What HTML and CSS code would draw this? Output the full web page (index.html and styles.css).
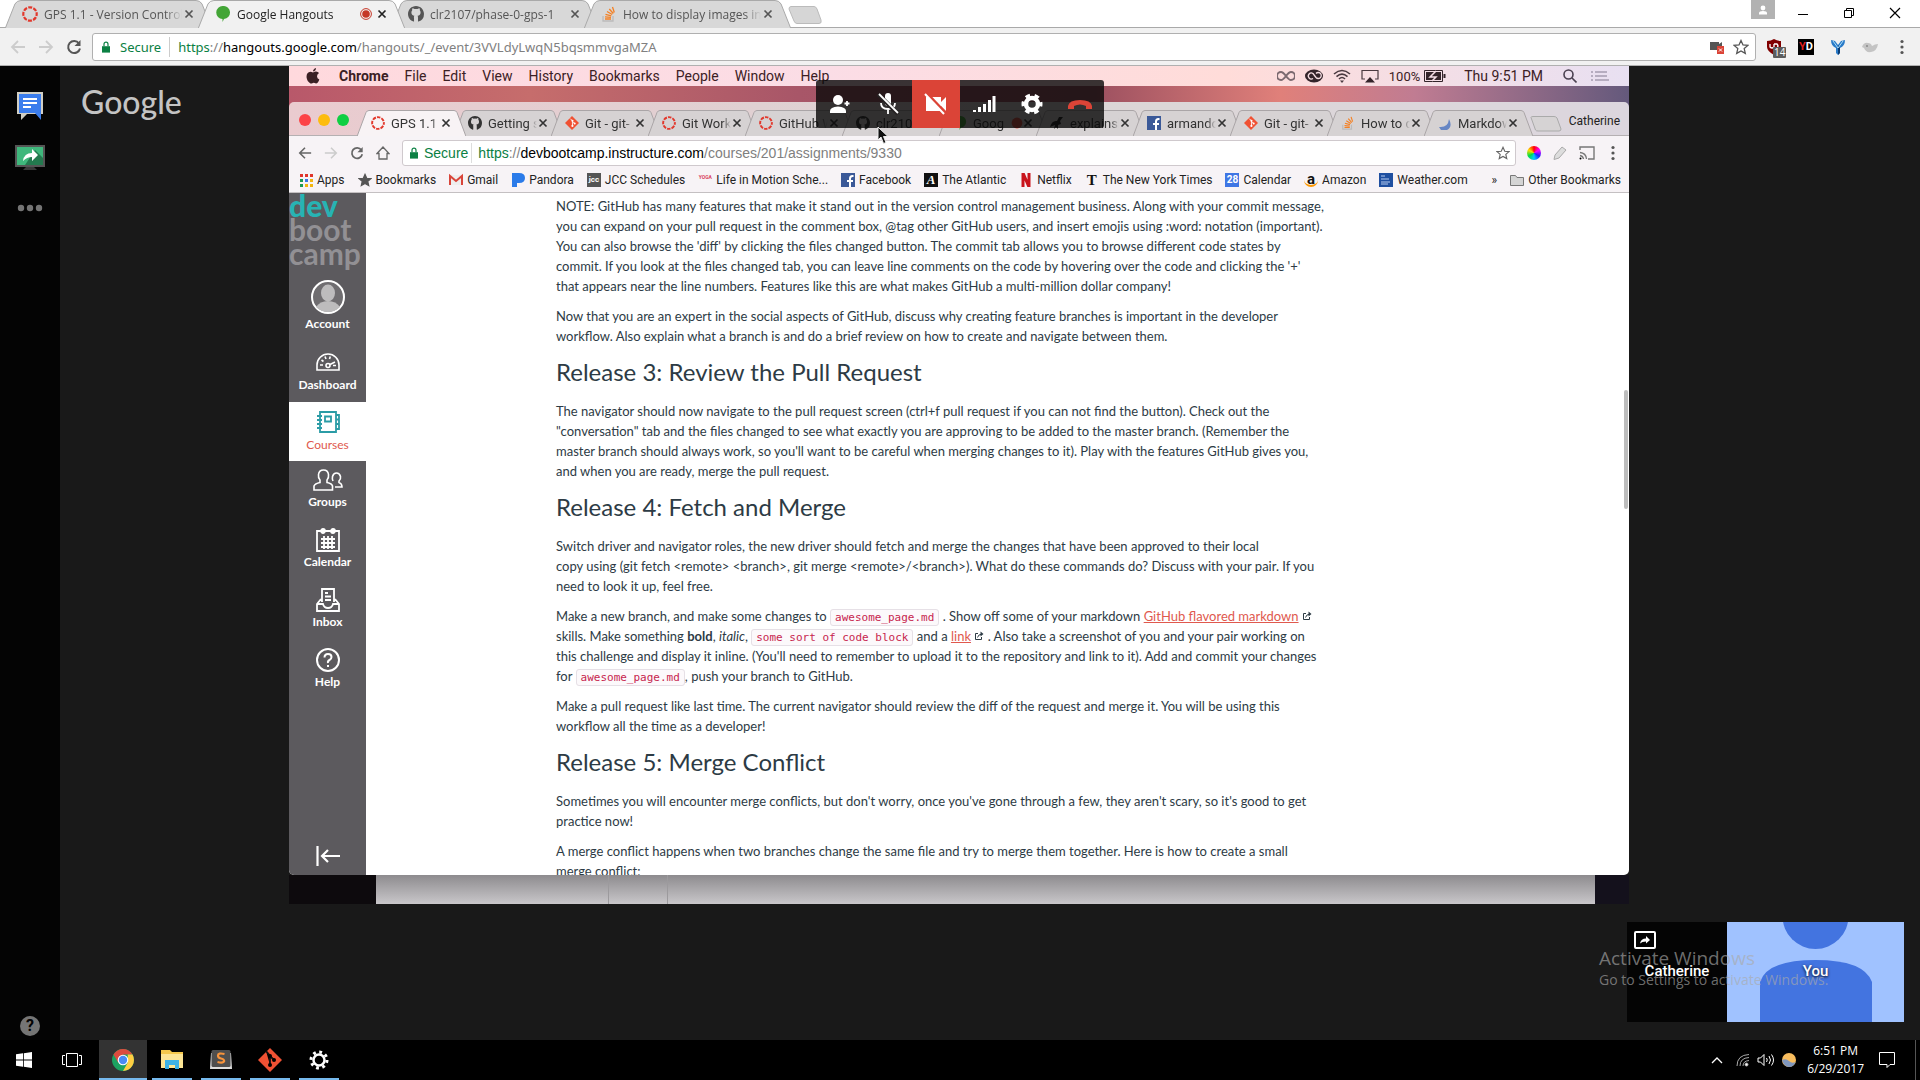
FILE: index.html
```html
<!DOCTYPE html>
<html lang="en">
<head>
<meta charset="utf-8">
<title>Google Hangouts</title>
<link rel="stylesheet" href="styles.css">
</head>
<body>
<svg class="defs" aria-hidden="true">
  <symbol id="tab" viewBox="0 0 208 28" preserveAspectRatio="none"><path d="M0 29L10 4Q12 .5 16 .5H192Q196 .5 198 4L208 29" vector-effect="non-scaling-stroke"/></symbol>
  <symbol id="mtab" viewBox="0 0 109 26" preserveAspectRatio="none"><path d="M0 26.500L9 2.500Q10 .5 12 .5H97Q99 .5 100 2.500L109 26.500" vector-effect="non-scaling-stroke"/></symbol>
  <symbol id="canvas" viewBox="0 0 16 16"><circle cx="8" cy="8" r="6.700" fill="none" stroke="#e2382c" stroke-width="2.200" stroke-dasharray="4 1.260" stroke-dashoffset="2"/></symbol>
  <symbol id="github" viewBox="0 0 16 16"><path fill="currentColor" d="M8 0C3.580 0 0 3.580 0 8c0 3.540 2.290 6.530 5.470 7.590.4.070.55-.17.55-.38v-3.300c-.3-1-.1-1.700.4-2.200C4.500 9.500 3.400 8.600 3.400 6.500c0-.9.300-1.600.8-2.200-.1-.6-.1-1.300.2-2 .8 0 1.500.4 2.100.8a7 7 0 0 1 3 0c.6-.4 1.300-.8 2.100-.8.300.7.300 1.400.2 2 .5.600.8 1.300.8 2.200 0 2.100-1.100 3-3 3.200.4.500.4 1.200.4 2v3.500c0 .2.150.46.55.38A8 8 0 0 0 16 8c0-4.420-3.580-8-8-8z"/></symbol>
  <symbol id="git" viewBox="0 0 16 16"><path fill="#f05133" d="M8 0L16 8L8 16L0 8z"/><path d="M6 3L8.500 5.500V11.500M8.500 6L11 8.500" stroke="#fff" fill="none"/><circle cx="8.500" cy="5.500" r="1.200" fill="#fff"/><circle cx="8.500" cy="11.300" r="1.200" fill="#fff"/><circle cx="11" cy="8.500" r="1.200" fill="#fff"/></symbol>
  <symbol id="stack" viewBox="0 0 16 16"><path d="M2 10v5h10v-5" fill="none" stroke="#bcbbbb" stroke-width="1.300"/><path d="M4 13h6M4 10.800l6 .6M4.500 8.300l5.800 1.600M6 5.500l5.200 3M8.300 3l4 4.500M11.500 1l1.800 5.500" stroke="#f48024" stroke-width="1.300"/></symbol>
  <symbol id="fb" viewBox="0 0 14 14"><path fill="#3b5998" d="M0 0h14v14H0z"/><path d="M9 14V8.500M6 8h6M9 9V5.500Q9 3 11.500 3H12.500" stroke="#fff" stroke-width="2" fill="none"/></symbol>
  <symbol id="x" viewBox="0 0 10 10"><path d="M1.500 1.500l7 7M8.500 1.500l-7 7" stroke="currentColor" stroke-width="1.700"/></symbol>
  <symbol id="lock" viewBox="0 0 10 14"><path d="M2.500 6V3.500a2.500 2.500 0 0 1 5 0V6" fill="none" stroke="#0b8043" stroke-width="1.500"/><path d="M0 6h10v8H0z" fill="#0b8043"/></symbol>
  <symbol id="back" viewBox="0 0 16 16"><path d="M15 8H2M8 2L2 8l6 6" fill="none" stroke="currentColor" stroke-width="1.800"/></symbol>
  <symbol id="fwd" viewBox="0 0 16 16"><path d="M1 8h13M8 2l6 6-6 6" fill="none" stroke="currentColor" stroke-width="1.800"/></symbol>
  <symbol id="reload" viewBox="0 0 16 16"><path d="M13 4.500A6 6 0 1 0 14 9.500" fill="none" stroke="currentColor" stroke-width="2"/><path d="M14.500 1v6h-6z" fill="currentColor"/></symbol>
  <symbol id="star" viewBox="0 0 16 16"><path d="M8 1.500l2 4.500 4.900.4-3.700 3.200 1.100 4.800L8 11.900l-4.300 2.500 1.100-4.800L1.100 6.400 6 6z" stroke="currentColor" stroke-width="1.300"/></symbol>
  <symbol id="dots" viewBox="0 0 4 16"><circle cx="2" cy="2.500" r="1.600"/><circle cx="2" cy="8" r="1.600"/><circle cx="2" cy="13.500" r="1.600"/></symbol>
  <symbol id="ext" viewBox="0 0 10 10"><path d="M4 2.500H1.500v6h6V6M3.500 6.500Q4 3.500 8 3" fill="none" stroke="#2d3b45"/><path d="M6.500.5L9.500 3l-3 2.500z" fill="#2d3b45"/></symbol>
</svg>

<header class="browser">
  <div class="strip">
    <div class="tab"><svg class="shape"><use href="#tab"/></svg><svg class="i16"><use href="#canvas"/></svg><span class="label">GPS 1.1 - Version Control</span><svg class="i10"><use href="#x"/></svg></div>
    <div class="tab on"><svg class="shape"><use href="#tab"/></svg><svg class="i16" viewBox="0 0 16 16"><path d="M8 0a6.500 6.500 0 0 1 1 13L7.500 16V13A6.500 6.500 0 0 1 8 0z" fill="#43a536"/></svg><span class="label">Google Hangouts</span><svg class="i12" viewBox="0 0 12 12"><circle cx="6" cy="6" r="5.400" fill="none" stroke="#c53727"/><circle cx="6" cy="6" r="3.800" fill="#c53727"/></svg><svg class="i10"><use href="#x"/></svg></div>
    <div class="tab"><svg class="shape"><use href="#tab"/></svg><svg class="i16"><use href="#github"/></svg><span class="label">clr2107/phase-0-gps-1</span><svg class="i10"><use href="#x"/></svg></div>
    <div class="tab"><svg class="shape"><use href="#tab"/></svg><svg class="i16"><use href="#stack"/></svg><span class="label">How to display images in</span><svg class="i10"><use href="#x"/></svg></div>
    <button class="newtab" aria-label="New tab"><svg width="34" height="18" viewBox="0 0 34 18"><path d="M1 3Q1 .5 3 .5H26Q28 .5 29 3L33 14Q34 17.500 31 17.500H9Q7 17.500 6 15z" fill="#d6d6d6" stroke="#bbb"/></svg></button>
    <div class="winctl">
      <span class="person"><svg width="10" height="10" viewBox="0 0 10 10" fill="#fff"><circle cx="5" cy="3" r="2.400"/><path d="M1 9.500V8q0-2 4-2t4 2v1.500z"/></svg></span>
      <button aria-label="Minimize"><svg class="i12" viewBox="0 0 12 12"><path d="M1 7.500h10" stroke="#000"/></svg></button>
      <button aria-label="Restore"><svg class="i12" viewBox="0 0 12 12" fill="none" stroke="#000"><path d="M1.500 3.500h7v7h-7zM3.500 3.500v-2h7v7h-2"/></svg></button>
      <button aria-label="Close"><svg class="i12" viewBox="0 0 12 12"><path d="M1 1l10 10M11 1L1 11" stroke="#000" stroke-width="1.200"/></svg></button>
    </div>
  </div>
  <div class="bar">
    <nav class="navs"><button class="dim" aria-label="Back"><svg class="i16"><use href="#back"/></svg></button><button class="dim" aria-label="Forward"><svg class="i16"><use href="#fwd"/></svg></button><button aria-label="Reload"><svg class="i16"><use href="#reload"/></svg></button></nav>
    <div class="omni">
      <svg class="lock"><use href="#lock"/></svg><span class="secure">Secure</span>
      <span class="url"><b>https</b>://<i>hangouts.google.com</i>/hangouts/_/event/3VVLdyLwqN5bqsmmvgaMZA</span>
      <svg width="16" height="14" viewBox="0 0 16 14"><path d="M1 2h9v2l3-2v8H1z" fill="#555"/><path d="M8 6h7v8H8z" fill="#db4437"/><path d="M10 8.500l3 3M13 8.500l-3 3" stroke="#fff"/></svg>
      <svg class="i16" fill="none" color="#555"><use href="#star"/></svg>
    </div>
    <div class="exts">
      <button class="ub" aria-label="Ad blocker, 14 blocked"><svg class="i16" viewBox="0 0 16 16"><path d="M1 2Q5 2 8 0q3 2 7 2v6q0 4-7 8-7-4-7-8z" fill="#800000"/><path d="M4 5v3q2 2 4 0V5v4h3q2-2 0-4H8" fill="none" stroke="#fff" stroke-width="1.300"/></svg><em>14</em></button>
      <button class="yd" aria-label="YD"><span>Y</span>D</button>
      <button aria-label="Extension"><svg class="i16" viewBox="0 0 16 16"><path d="M1 1l4 1 3 4 3-4 4-1q0 6-5 8v5l-2 2-2-2V9Q1 7 1 1z" fill="#2a7bc8"/><path d="M8 6v10l2-2V9z" fill="#0b3d74"/><path d="M3 2l5 7 5-7" stroke="#a8dcf8" fill="none"/></svg></button>
      <button aria-label="Extension"><svg class="i16" viewBox="0 0 16 16"><path d="M0 8q2-5 6-4 3 0 4 3 3-2 6-2-1 7-7 8-5 1-7-4z" fill="#c4c4c4"/><circle cx="5" cy="7" r="1" fill="#888"/></svg></button>
      <button aria-label="Menu"><svg class="dots"><use href="#dots"/></svg></button>
    </div>
  </div>
</header>

<main class="app">
  <aside class="rail">
    <button aria-label="Chat"><svg width="28" height="30" viewBox="0 0 28 30"><path d="M1 1h26v22H11l-6 6v-6H1z" fill="#d2cfc4"/><path d="M3 3h22v26l-6-7H3z" fill="#3b7ded"/><path d="M7 8h14M7 12h14M7 16h8" stroke="#fff" stroke-width="2"/></svg></button>
    <button aria-label="Share screen"><svg width="30" height="26" viewBox="0 0 30 26"><path d="M0 0h30v22H0z" fill="#555"/><path d="M2 2h26v18H2z" fill="#3fb77c"/><path d="M20 5l8 8v7H10z" fill="#23794e"/><path d="M8 16q1-8 9-8V4l6 6-6 6v-4q-5 0-9 4z" fill="#fff"/><path d="M11 22h8l3 3H8z" fill="#3a3a3a"/></svg></button>
    <button aria-label="More"><svg width="26" height="8" viewBox="0 0 26 8" fill="#747474"><circle cx="4" cy="4" r="3.200"/><circle cx="13" cy="4" r="3.200"/><circle cx="22" cy="4" r="3.200"/></svg></button>
    <button class="help" aria-label="Help">?</button>
  </aside>
  <section class="stage">
    <div class="google">Google</div>
    <div class="share">
      <div class="menubar">
        <svg class="apple" width="14" height="16" viewBox="0 0 14 16"><path d="M10 0q0 3-3 3.500Q7 1 10 0zM7 4.500q1.500-1 3-1 2 0 3 1.500-2 1.200-2 3.200 0 2.300 2.300 3.300Q12 15.500 10 15.500q-1.500-.8-3-.6-1.500.6-2.500.6Q1 13.500.5 9 .5 4 4.500 3.700q1 0 2.500.8z" fill="#3b2024"/></svg>
        <strong>Chrome</strong><span>File</span><span>Edit</span><span>View</span><span>History</span><span>Bookmarks</span><span>People</span><span>Window</span><span>Help</span>
        <div class="status">
          <svg width="18" height="12" viewBox="0 0 18 12"><path d="M9 6Q6 2 4 2a4 4 0 0 0 0 8q2 0 5-4t5-4a4 4 0 0 1 0 8q-2 0-5-4z" fill="none" stroke="#7b6a70" stroke-width="2"/></svg>
          <svg width="18" height="14" viewBox="0 0 18 14"><ellipse cx="9" cy="7" rx="9" ry="6.500" fill="#33242a"/><path d="M8 9.500a3 3 0 1 1 0-5l3 4a3 3 0 1 0 0-4" fill="none" stroke="#f6dfe4" stroke-width="1.300"/></svg>
          <svg width="18" height="14" viewBox="0 0 18 14"><path d="M1 5q8-7 16 0M3.500 7.700q5.500-5 11 0M6 10q3-3 6 0" fill="none" stroke="#4a3a40" stroke-width="1.600"/><path d="M7 11.500h4L9 14z" fill="#4a3a40"/></svg>
          <svg width="18" height="14" viewBox="0 0 18 14"><path d="M4 10H1V1.500h16V10h-3" fill="none" stroke="#4a3a40" stroke-width="1.200"/><path d="M4 13.500h10L9 8z" fill="#33242a"/></svg>
          <span class="pct">100%</span>
          <svg width="22" height="12" viewBox="0 0 22 12"><path d="M.5.5h18v11H.5z" fill="none" stroke="#33242a"/><path d="M2 2h15v8H2zM19.500 4h2v4h-2z" fill="#33242a"/><path d="M12 1L6 7h6l-4 4" fill="none" stroke="#f3dde6" stroke-width="1.500"/></svg>
          <span class="clock">Thu 9:51 PM</span>
          <svg width="14" height="14" viewBox="0 0 14 14" fill="none" stroke="#4a4050" stroke-width="1.600"><circle cx="5.500" cy="5.500" r="4.500"/><path d="M9 9l4.500 4.500"/></svg>
          <svg width="18" height="12" viewBox="0 0 18 12"><path d="M0 2h2M4 2h12M0 6h2M4 6h12M0 10h2M4 10h14" stroke="#a59cb0" stroke-width="1.300"/></svg>
        </div>
      </div>
      <div class="window">
        <div class="mstrip">
          <div class="lights"><i class="r"></i><i class="y"></i><i class="g"></i></div>
          <div class="mtab on"><svg class="shape"><use href="#mtab"/></svg><svg class="i14"><use href="#canvas"/></svg><span class="label">GPS 1.1</span><svg class="i10"><use href="#x"/></svg></div>
          <div class="mtab"><svg class="shape"><use href="#mtab"/></svg><svg class="i14"><use href="#github"/></svg><span class="label">Getting s</span><svg class="i10"><use href="#x"/></svg></div>
          <div class="mtab"><svg class="shape"><use href="#mtab"/></svg><svg class="i14"><use href="#git"/></svg><span class="label">Git - git-</span><svg class="i10"><use href="#x"/></svg></div>
          <div class="mtab"><svg class="shape"><use href="#mtab"/></svg><svg class="i14"><use href="#canvas"/></svg><span class="label">Git Work</span><svg class="i10"><use href="#x"/></svg></div>
          <div class="mtab"><svg class="shape"><use href="#mtab"/></svg><svg class="i14"><use href="#canvas"/></svg><span class="label">GitHub W</span><svg class="i10"><use href="#x"/></svg></div>
          <div class="mtab"><svg class="shape"><use href="#mtab"/></svg><svg class="i14"><use href="#github"/></svg><span class="label">clr2107</span><svg class="i10"><use href="#x"/></svg></div>
          <div class="mtab"><svg class="shape"><use href="#mtab"/></svg><svg class="i14" viewBox="0 0 16 16"><path d="M8 0a6.500 6.500 0 0 1 1 13L7.500 16V13A6.500 6.500 0 0 1 8 0z" fill="#43a536"/></svg><span class="label">Goog</span><svg class="i12" viewBox="0 0 12 12"><circle cx="6" cy="6" r="5.400" fill="#e05040"/></svg><svg class="i10"><use href="#x"/></svg></div>
          <div class="mtab"><svg class="shape"><use href="#mtab"/></svg><svg class="i14" viewBox="0 0 14 14"><path d="M0 11q2-7 7-6L9 1h4l-3 4 1 3-3 1v4L6 11l-2 2 1-4z" fill="#222"/></svg><span class="label">explainsh</span><svg class="i10"><use href="#x"/></svg></div>
          <div class="mtab"><svg class="shape"><use href="#mtab"/></svg><svg class="i14"><use href="#fb"/></svg><span class="label">armando</span><svg class="i10"><use href="#x"/></svg></div>
          <div class="mtab"><svg class="shape"><use href="#mtab"/></svg><svg class="i14"><use href="#git"/></svg><span class="label">Git - git-</span><svg class="i10"><use href="#x"/></svg></div>
          <div class="mtab"><svg class="shape"><use href="#mtab"/></svg><svg class="i14"><use href="#stack"/></svg><span class="label">How to d</span><svg class="i10"><use href="#x"/></svg></div>
          <div class="mtab"><svg class="shape"><use href="#mtab"/></svg><svg class="i14" viewBox="0 0 14 14"><path d="M1 11q9 1 10-8 4 8-2 11H3z" fill="#6685c4"/></svg><span class="label">Markdow</span><svg class="i10"><use href="#x"/></svg></div>
          <svg class="mnew" width="32" height="16" viewBox="0 0 32 16"><path d="M1 1.500Q1 .5 3 .5H24Q26 .5 27 2l4 11q0 2-2 2H8q-2 0-2.500-1z" fill="#d6d3d4" stroke="#aaa"/></svg>
          <span class="user">Catherine</span>
        </div>
        <div class="mbar">
          <nav class="navs"><svg class="i14"><use href="#back"/></svg><svg class="i14 dim"><use href="#fwd"/></svg><svg class="i14"><use href="#reload"/></svg><svg class="i14" viewBox="0 0 14 14"><path d="M1 7.500L7 1l6 6.500h-2V13H3V7.500z" fill="none" stroke="#666" stroke-width="1.300"/></svg></nav>
          <div class="omni">
            <svg class="lock"><use href="#lock"/></svg><span class="secure">Secure</span>
            <span class="url"><b>https</b>://<i>devbootcamp.instructure.com</i>/courses/201/assignments/9330</span>
            <svg class="i14" fill="none" color="#666"><use href="#star"/></svg>
          </div>
          <div class="exts"><span class="wheel"></span><svg class="i14" viewBox="0 0 14 14"><path d="M2 9L9 1l4 3-7 8-5 1.500z" fill="#ddd" stroke="#aaa"/></svg><svg width="16" height="14" viewBox="0 0 16 14"><path d="M1 4V1h14v12H9" fill="none" stroke="#777" stroke-width="1.400"/><path d="M1 6.500Q7 7 7.500 13M1 9.500Q4 10 4.500 13" fill="none" stroke="#777" stroke-width="1.300"/><circle cx="1.500" cy="12.500" r="1"/></svg><svg class="dots" fill="#555"><use href="#dots"/></svg></div>
        </div>
        <div class="marks">
          <a href="#"><svg viewBox="0 0 14 14"><path d="M1 1h3v3H1zM6 1h3v3H6zM11 1h3v3h-3z" fill="#e0352b"/><path d="M1 6h3v3H1zM1 11h3v3H1z" fill="#1c9a55"/><path d="M6 6h3v3H6z" fill="#3b78e7"/><path d="M11 6h3v3h-3zM6 11h3v3H6zM11 11h3v3h-3z" fill="#f2b50f"/></svg>Apps</a>
          <a href="#"><svg fill="#555" color="#555"><use href="#star"/></svg>Bookmarks</a>
          <a href="#"><svg viewBox="0 0 14 14"><path d="M0 2h14v10H0z" fill="#eee"/><path d="M1 12V3l6 5 6-5v9" fill="none" stroke="#d9453a" stroke-width="2"/></svg>Gmail</a>
          <a href="#"><svg viewBox="0 0 14 14"><path d="M1 0h7q6 0 6 5t-6 5H6v4H1z" fill="#2b7be9"/></svg>Pandora</a>
          <a href="#"><span class="fav jcc">jcc</span>JCC Schedules</a>
          <a href="#"><span class="fav yoga">YOGA</span>Life in Motion Sche...</a>
          <a href="#"><svg><use href="#fb"/></svg>Facebook</a>
          <a href="#"><span class="fav atl">A</span>The Atlantic</a>
          <a href="#"><svg viewBox="0 0 14 14"><path d="M4 14V0l6 14V0" fill="none" stroke="#c9141c" stroke-width="3"/></svg>Netflix</a>
          <a href="#"><span class="fav nyt">T</span>The New York Times</a>
          <a href="#"><span class="fav cal">28</span>Calendar</a>
          <a href="#"><span class="fav amz">a</span>Amazon</a>
          <a href="#"><svg viewBox="0 0 14 14"><path d="M0 0h14v14H0z" fill="#1f4fa0"/><path d="M2 3h4M2 6h8M2 9h9M2 11h7" stroke="#b9cdf0"/></svg>Weather.com</a>
          <span class="more">»</span>
          <a href="#"><svg viewBox="0 0 14 14"><path d="M.5 12.500v-10h5l1.500 2h6.500v8z" fill="#d4d4d4" stroke="#777"/></svg>Other Bookmarks</a>
        </div>
        <div class="page">
          <nav class="side">
            <div class="logo"><b>dev</b><br>boot<br>camp</div>
            <a href="#" class="acct"><svg width="34" height="34" viewBox="0 0 34 34"><circle cx="17" cy="17" r="16" fill="#6f6d70" stroke="#fff" stroke-width="2"/><ellipse cx="17" cy="13" rx="7" ry="8.500" fill="#bdbcbd"/><path d="M5 27q4-6 12-6t12 6q-5 5-12 5T5 27z" fill="#bdbcbd"/></svg>Account</a>
            <a href="#" class="dash"><svg viewBox="0 0 24 24" fill="none" stroke="#fff" stroke-width="1.600"><path d="M1 20v-5a11 11 0 0 1 22 0v5z"/><circle cx="12" cy="15.500" r="2"/><path d="M14 14.500l5-2.500M4 15h3M17 15.500h3M5.500 10l2 1.500M9 6.500l1 2.500M13.500 9l.8-2.500"/></svg>Dashboard</a>
            <a href="#" class="cur"><svg viewBox="0 0 24 24" fill="none" stroke="#2b9ca6" stroke-width="1.800"><path d="M4 2h16v20H4zM9 6.500h6v5H9zM1 6h5M1 10h5M1 14h5M1 18h5M20 5h3v14h-3M20 9.500h3M20 14h3"/></svg>Courses</a>
            <a href="#"><svg width="30" viewBox="0 0 30 24" fill="none" stroke="#fff" stroke-width="1.600"><path d="M7 12Q5 10 5.500 6.500q.5-4.500 5-4.500t5 4.500Q16 10 14 12v2.500q5 1 5.500 3.500v4H1v-4q1-2.500 6-3.500z"/><path d="M20 13q-1-2-.5-4.500 1-3.500 4-3.500t4 3.500Q28 11 26 13v1.500q3 1 3 4.500h-7"/></svg>Groups</a>
            <a href="#"><svg viewBox="0 0 24 24" fill="none" stroke="#fff" stroke-width="1.800"><path d="M1 3h22v20H1zM5 11h14M5 15h14M5 19h14M8 8v13M12 8v13M16 8v13"/><circle cx="7" cy="3" r="2"/><circle cx="17" cy="3" r="2"/></svg>Calendar</a>
            <a href="#"><svg viewBox="0 0 24 24" fill="none" stroke="#fff" stroke-width="1.800"><path d="M6 14V1h12v13M9 5h3M9 8.500h6M9 12h6M5 11l-4 5v7h22v-7l-4-5M1 16h6q1 4 5 4t5-4h6"/></svg>Inbox</a>
            <a href="#"><svg viewBox="0 0 24 24" fill="none" stroke="#fff" stroke-width="2"><circle cx="12" cy="12" r="11"/><path d="M8.500 9.500Q8.500 6 12 6t3.500 3q0 2-2 3T12 15M12 17v2"/></svg>Help</a>
            <button class="collapse" aria-label="Minimize navigation"><svg width="24" height="20" viewBox="0 0 24 20" fill="none" stroke="#fff" stroke-width="2.200"><path d="M1.500 0v20M24 10H7M12 4l-6 6 6 6"/></svg></button>
          </nav>
          <article>
            <p>NOTE: GitHub has many features that make it stand out in the version control management business. Along with your commit message,<br>you can expand on your pull request in the comment box, @tag other GitHub users, and insert emojis using :word: notation (important).<br>You can also browse the 'diff' by clicking the files changed button. The commit tab allows you to browse different code states by<br>commit. If you look at the files changed tab, you can leave line comments on the code by hovering over the code and clicking the '+'<br>that appears near the line numbers. Features like this are what makes GitHub a multi-million dollar company!</p>
            <p>Now that you are an expert in the social aspects of GitHub, discuss why creating feature branches is important in the developer<br>workflow. Also explain what a branch is and do a brief review on how to create and navigate between them.</p>
            <h2>Release 3: Review the Pull Request</h2>
            <p>The navigator should now navigate to the pull request screen (ctrl+f pull request if you can not find the button). Check out the<br>"conversation" tab and the files changed to see what exactly you are approving to be added to the master branch. (Remember the<br>master branch should always work, so you'll want to be careful when merging changes to it). Play with the features GitHub gives you,<br>and when you are ready, merge the pull request.</p>
            <h2>Release 4: Fetch and Merge</h2>
            <p>Switch driver and navigator roles, the new driver should fetch and merge the changes that have been approved to their local<br>copy using (git fetch &lt;remote&gt; &lt;branch&gt;, git merge &lt;remote&gt;/&lt;branch&gt;). What do these commands do? Discuss with your pair. If you<br>need to look it up, feel free.</p>
            <p>Make a new branch, and make some changes to <code>awesome_page.md</code> . Show off some of your markdown <a href="#">GitHub flavored markdown</a> <svg class="ext"><use href="#ext"/></svg><br>skills. Make something <b>bold</b>, <i>italic</i>, <code>some sort of code block</code> and a <a href="#">link</a> <svg class="ext"><use href="#ext"/></svg> . Also take a screenshot of you and your pair working on<br>this challenge and display it inline. (You'll need to remember to upload it to the repository and link to it). Add and commit your changes<br>for <code>awesome_page.md</code>, push your branch to GitHub.</p>
            <p>Make a pull request like last time. The current navigator should review the diff of the request and merge it. You will be using this<br>workflow all the time as a developer!</p>
            <h2>Release 5: Merge Conflict</h2>
            <p>Sometimes you will encounter merge conflicts, but don't worry, once you've gone through a few, they aren't scary, so it's good to get<br>practice now!</p>
            <p>A merge conflict happens when two branches change the same file and try to merge them together. Here is how to create a small<br>merge conflict:</p>
          </article>
          <div class="thumb"></div>
        </div>
      </div>
      <div class="desk"><i></i><i></i><i></i><i></i></div>
      <div class="controls">
        <button aria-label="Invite people"><svg viewBox="0 0 24 24" fill="#fff"><circle cx="10" cy="8" r="5"/><path d="M2 21v-2q0-4 8-4.500 8 .5 8 4.500v2z"/><path d="M16.500 11.500h5M19 9v5" stroke="#fff" stroke-width="1.800"/></svg></button>
        <button aria-label="Unmute microphone"><svg viewBox="0 0 24 24" fill="#fff"><rect x="9" y="1" width="6" height="13" rx="3"/><path d="M5 11q0 6 7 6t7-6M12 17v5" fill="none" stroke="#fff" stroke-width="1.800"/><path d="M2 2l20 20" stroke="#262223" stroke-width="4"/><path d="M3 2l19 19" stroke="#fff" stroke-width="1.800"/></svg></button>
        <button class="off" aria-label="Turn on camera"><svg viewBox="0 0 24 24" fill="#fff"><path d="M2 5h15v5l5-5v14l-5-5v5H2z"/><path d="M2 .5l20 21" stroke="#db4437" stroke-width="3"/><path d="M1 2l19 20" stroke="#fff" stroke-width="2"/></svg></button>
        <button aria-label="Bandwidth"><svg viewBox="0 0 24 24" stroke="#fff" stroke-width="3"><path d="M2.500 20v-2M7.500 20v-5M12.500 20v-8M17.500 20V8M22 20V4"/></svg></button>
        <button aria-label="Settings"><svg viewBox="0 0 24 24"><circle cx="12" cy="12" r="6" fill="none" stroke="#fff" stroke-width="4.500"/><circle cx="12" cy="12" r="9" fill="none" stroke="#fff" stroke-width="3" stroke-dasharray="4.700 4.720" stroke-dashoffset="2.300"/></svg></button>
        <button aria-label="Leave call"><svg viewBox="0 0 24 24"><path d="M0 14Q1 8 12 8t12 6v3h-6v-3q-6-3-12 0v3H0z" fill="#db4437"/></svg></button>
      </div>
      <svg class="cursor" width="13" height="19" viewBox="0 0 13 19"><path d="M1 1v13l3-3 2.500 6.500 2.500-1L6.500 10.500H11z" fill="#111" stroke="#eee"/></svg>
    </div>
    <div class="people">
      <div class="p1"><svg width="22" height="18" viewBox="0 0 22 18"><rect x="1" y="1" width="20" height="16" rx="1" fill="none" stroke="#fff" stroke-width="2"/><path d="M6 12.500q1-5 6-5V5l4 4-4 3.500V10.500q-4 0-6 2z" fill="#fff"/></svg><span>Catherine</span></div>
      <div class="p2"><svg viewBox="0 0 177 100"><circle cx="88.500" cy="-6" r="33"/><path d="M33 100V60Q40 38 88.500 38T145 60V100z"/></svg><span>You</span></div>
      <div class="water"><p>Activate Windows</p><small>Go to Settings to activate Windows.</small></div>
    </div>
  </section>
</main>

<footer class="taskbar">
  <button aria-label="Start"><svg class="i16" viewBox="0 0 16 16" fill="#fff"><path d="M0 2.300L7 1.300V7.600H0zM7.800 1.200L16 0v7.600H7.800zM0 8.400h7v6.300l-7-1zM7.800 8.400H16V16l-8.200-1.200z"/></svg></button>
  <button class="view" aria-label="Task view"><svg width="20" height="14" viewBox="0 0 20 14" fill="none" stroke="#fff"><path d="M4.500.5h11v13h-11zM3 2.500H.5v9H3M17 2.500h2.500v9H17"/></svg></button>
  <button class="app-btn active" aria-label="Chrome"><svg width="22" height="22" viewBox="0 0 22 22"><circle cx="11" cy="11" r="11" fill="#1ca261"/><path d="M1.500 5.500A11 11 0 0 1 20.500 5.500H11L6.300 13.700z" fill="#dd4b3e"/><path d="M20.500 5.500A11 11 0 0 1 11 22l4.700-8.300V5.500z" fill="#ffcd42"/><circle cx="11" cy="11" r="5.300" fill="#fff"/><circle cx="11" cy="11" r="4.200" fill="#4a8af4"/></svg></button>
  <button class="app-btn" aria-label="File Explorer"><svg width="22" height="20" viewBox="0 0 22 20"><path d="M0 2V0h9l2 2h11v16H0z" fill="#f5c84c"/><path d="M0 4h22v14H0z" fill="#fde595"/><path d="M4 19v-9h14v9h-4v-4H8v4z" fill="#3db2e5"/></svg></button>
  <button class="app-btn" aria-label="Sublime Text"><svg width="22" height="22" viewBox="0 0 22 22"><path d="M1 4h20l1 16H0z" fill="#ddd"/><rect x="1.500" y="1" width="19" height="17" rx="1.500" fill="#4e4e4e"/><path d="M14.500 5Q8 3.500 8 6.500 8 9 11 9.500t3.200 2.500Q13.500 14.500 7.500 13" fill="none" stroke="#f7933b" stroke-width="2.200"/></svg></button>
  <button class="app-btn" aria-label="Git"><svg width="24" height="24" viewBox="0 0 24 24"><path d="M12 0L24 12 12 24 0 12z" fill="#f05133"/><path d="M8 3l4 4.500V17M12 8l4 4" stroke="#111" stroke-width="1.800"/><circle cx="12" cy="8" r="2"/><circle cx="12" cy="17" r="2"/><circle cx="16" cy="12" r="2"/></svg></button>
  <button class="app-btn" aria-label="Settings"><svg width="20" height="20" viewBox="0 0 20 20" fill="none" stroke="#fff"><circle cx="10" cy="10" r="5.500" stroke-width="2.500"/><circle cx="10" cy="10" r="8" stroke-width="3" stroke-dasharray="2.800 3.480"/></svg></button>
  <div class="tray">
    <svg width="12" height="8" viewBox="0 0 12 8"><path d="M1 7l5-5 5 5" fill="none" stroke="#fff" stroke-width="1.300"/></svg>
    <svg width="14" height="14" viewBox="0 0 14 14" fill="none" stroke="#aaa"><path d="M1 13Q1 2 13 1.500M4 13Q4 5 13 4.500M7 13q0-5 6-5.500" /><circle cx="10.500" cy="11.500" r="1.500" fill="#fff"/></svg>
    <svg width="18" height="14" viewBox="0 0 18 14" fill="none" stroke="#fff"><path d="M1 5h2.500L7 1.500v11L3.500 9H1zM9.500 5q1.500 2 0 4M12 3q3 4 0 8M14.500 1.500q4 5.500 0 11"/></svg>
    <svg width="14" height="14" viewBox="0 0 14 14"><circle cx="7" cy="7" r="7" fill="#f8bd5e"/><path d="M0 7q4-2 7 1t6.500 1Q12 14 7 14T0 7z" fill="#7f96bd"/></svg>
    <div class="time">6:51 PM<br>6/29/2017</div>
    <svg class="note" width="16" height="16" viewBox="0 0 16 16" fill="none" stroke="#fff"><path d="M.5.500h15v12H11L8 15.500V12.500H.5z"/></svg>
  </div>
</footer>
</body>
</html>
```
FILE: styles.css
```css
* { box-sizing: border-box; }
html, body { height: 100%; }
body { margin: 0; display: flex; flex-direction: column; overflow: hidden; font-family: "Open Sans", sans-serif; background: #191919; }
button { border: 0; padding: 0; background: none; font: inherit; color: inherit; display: flex; align-items: center; justify-content: center; }
svg { display: block; flex: none; }
a { color: inherit; text-decoration: none; }
.defs { position: absolute; width: 0; height: 0; }
.i10 { width: 10px; height: 10px; }
.i12 { width: 12px; height: 12px; }
.i14 { width: 14px; height: 14px; }
.i16 { width: 16px; height: 16px; }
.dots { width: 4px; height: 16px; }
.lock { width: 8px; height: 12px; }

/* outer browser */
.browser { flex: none; background: #fff; }
.strip { display: flex; height: 28px; padding-left: 5px; border-bottom: 1px solid #a9a9a9; }
.tab { position: relative; display: flex; align-items: center; flex: 0 1 207px; min-width: 0; height: 28px; margin-right: -14px; padding: 0 18px 0 17px; font-size: 12px; color: #555; }
.tab .shape, .mtab .shape { position: absolute; left: 0; top: 0; width: 100%; height: 100%; fill: #d8d8d8; stroke: #a9a9a9; }
.tab > *, .mtab > * { position: relative; }
.tab .label { flex: 1; margin: 0 2px 0 6px; overflow: hidden; white-space: nowrap; mask-image: linear-gradient(90deg, #000 88%, transparent); }
.tab.on { z-index: 1; color: #222; }
.tab.on .shape { fill: #f1f1f1; }
.tab .i12 { margin-right: 5px; }
.newtab { margin: 3px 0 0 11px; align-self: center; }
.winctl { display: flex; margin-left: auto; align-items: flex-start; }
.winctl button { width: 46px; height: 26px; }
.person { width: 24px; height: 19px; margin-right: 5px; background: #b2b2b2; display: flex; align-items: center; justify-content: center; }
.winctl button:last-child { margin-right: 2px; }
.bar { display: flex; align-items: center; height: 38px; background: #f1f1f1; border-bottom: 1px solid #b0b0b0; padding-left: 10px; }
.bar .navs { display: flex; gap: 12px; margin-right: 10px; color: #555; }
.dim { color: #ccc; }
.omni { flex: 1; min-width: 0; display: flex; align-items: center; background: #fff; border: 1px solid #b0b0b0; border-radius: 3px; }
.bar .omni { height: 28px; padding: 0 6px 0 9px; gap: 8px; font: 13px/20px "Noto Sans", sans-serif; }
.secure { color: #0b8043; border-right: 1px solid #ccc; }
.bar .secure { margin-left: 2px; padding-right: 8px; }
.url { flex: 1; overflow: hidden; white-space: nowrap; color: #808080; }
.url b { font-weight: 400; color: #0b8043; }
.url i { font-style: normal; color: #000; }
.exts { display: flex; align-items: center; }
.bar .exts { gap: 16px; padding: 0 16px 0 10px; color: #555; }
.bar .exts .dots { fill: #555; margin-left: 6px; }
.ub { position: relative; }
.ub em { position: absolute; left: 7px; top: 8px; padding: 0 1px; background: #5c5c5c; color: #fff; font: 10px/11px "Open Sans", sans-serif; border-radius: 1px; }
.yd { width: 16px; height: 16px; background: #000; color: #fff; font: 700 11px/16px Roboto, sans-serif; }
.yd span { color: #e02020; }

/* hangouts */
.app { flex: 1; min-height: 0; display: flex; }
.rail { flex: none; width: 60px; background: #040404; display: flex; flex-direction: column; align-items: center; padding: 25px 0 0; }
.rail button { margin-bottom: 24px; }
.rail button + button { margin-bottom: 33px; }
.rail .help { width: 20px; height: 20px; margin: auto 0 0; border-radius: 50%; background: #757575; color: #040404; font: 700 16px/20px Roboto, sans-serif; }
.rail button.help { margin-bottom: 4px; }
.stage { position: relative; flex: 1; min-width: 0; display: flex; flex-direction: column; }
.google { position: absolute; left: 21px; top: 16px; font: 500 32px/40px Lato, sans-serif; color: #c4c4c4; }
.share { position: relative; flex: 1; min-height: 0; width: 100%; max-width: 1402px; margin: 0 auto; padding-right: 62px; display: flex; flex-direction: column; font-family: Roboto, sans-serif; }
.menubar { flex: none; display: flex; align-items: center; gap: 16px; height: 20px; padding: 0 20px 0 17px; font-size: 14px; color: #3b2024; background: linear-gradient(90deg, #ffd9dd, #fbdde6 40%, #ffdcd9 70%, #e8e0f2); white-space: nowrap; }
.apple { margin-right: 3px; }
.status { display: flex; align-items: center; gap: 10px; margin-left: auto; }
.pct { font-size: 13px; margin-right: -6px; }
.clock { margin: 0 10px 0 8px; }
.status svg:last-child { margin-left: 4px; }
.window { flex: 1; min-height: 0; display: flex; flex-direction: column; padding-top: 16px; background: linear-gradient(90deg, #b8586a, #c66d6c 18%, #a85668 38%, #9c5060 60%, #e0807a 74%, #c07c92 84%, #64597c) top / 100% 24px no-repeat; }
.mstrip { flex: none; display: flex; align-items: flex-end; height: 34px; background: linear-gradient(90deg, #eacbcf, #e0d0d2 35%, #dcd6d6 60%, #dcd6de); border-bottom: 1px solid #b5b0b2; border-radius: 5px 5px 0 0; }
.lights { display: flex; gap: 7px; padding: 0 8px 9px 10px; }
.lights i { width: 12px; height: 12px; border-radius: 50%; }
.r { background: #fc4347; } .y { background: #fdbc0e; } .g { background: #0fcf43; }
.mtab { position: relative; flex: 0 1 109px; min-width: 0; height: 26px; margin: 0 -12px -1px 0; padding: 0 15px 0 14px; display: flex; align-items: center; font-size: 13px; color: #333; }
.mtab .shape { fill: #d6d2d3; stroke: #aaa5a7; }
.mtab.on { z-index: 1; }
.mtab.on .shape { fill: #f8f3f5; }
.mtab .label { flex: 1; margin: 0 1px 0 6px; overflow: hidden; white-space: nowrap; mask-image: linear-gradient(90deg, #000 82%, transparent); }
.mnew { margin: 0 0 3px 9px; }
.user { margin-left: auto; padding: 0 9px 7px 0; font-size: 12px; color: #222; }
.mbar { flex: none; height: 33px; display: flex; align-items: center; padding: 1px 14px 0 9px; background: #f7f3f6; color: #666; }
.mbar .navs { display: flex; gap: 12px; margin-right: 12px; }
.mbar .omni { height: 26px; padding: 0 5px 0 7px; gap: 6px; font: 14px/20px "Liberation Sans", sans-serif; border-color: #cfc9cd; }
.mbar .secure { padding-right: 3px; border-color: #ddd; }
.mbar .exts { gap: 12px; padding-left: 11px; }
.mbar .exts .dots { margin-left: 4px; }
.wheel { width: 14px; height: 14px; border-radius: 50%; background: conic-gradient(red, #f0f, #22f, #0cf, #0d4, #fd0, red); }
.marks { flex: none; display: flex; align-items: center; gap: 13px; height: 24px; padding: 0 8px 2px 10px; background: #f7f3f6; border-bottom: 1px solid #c4c0c2; font-size: 12px; color: #222; white-space: nowrap; }
.marks a { display: flex; align-items: center; gap: 4px; }
.marks svg, .fav { width: 14px; height: 14px; }
.fav { text-align: center; font: 700 10px/14px Roboto, sans-serif; color: #fff; }
.jcc { background: #555; font-size: 8px; }
.yoga { color: #d9435e; font-size: 5px; line-height: 8px; }
.atl { background: #111; font: italic 700 13px/14px "Liberation Serif", serif; }
.nyt { color: #111; font: 700 15px/14px "Liberation Serif", serif; }
.cal { background: #3f76e4; }
.amz { color: #111; font-size: 15px; line-height: 12px; border-bottom: 2px solid #f90; border-radius: 0 0 7px 7px; }
.more { margin-left: auto; }
.page { flex: 1; min-height: 0; overflow: hidden; display: flex; background: #fff; border-radius: 0 0 5px 5px; font-family: Lato, sans-serif; }
.side { flex: none; width: 77px; background: #5c5a5e; display: flex; flex-direction: column; align-items: stretch; font-size: 12px; font-weight: 700; color: #fff; }
.logo { flex: none; height: 70px; font-size: 30px; line-height: 24px; color: #929094; }
.logo b { color: #27b3b3; }
.side a { flex: none; display: flex; flex-direction: column; align-items: center; height: 60px; padding-top: 7px; line-height: 14px; gap: 3px; }
.side a > svg:not([height]) { height: 24px; }
.side a > svg:not([width]) { width: 24px; }
.side .acct { height: 79px; padding-top: 17px; }
.side .dash, .side .cur { padding-top: 8px; gap: 4px; }
.side .cur { background: #fff; color: #e0594e; font-weight: 400; height: 59px; }
.collapse { margin: auto 0 9px; }
article { flex: 1; min-width: 0; padding: 3px 0 0 190px; font-size: 13px; line-height: 20px; color: #2d3b45; white-space: nowrap; }
article p { margin: 0 0 10px; }
article h2 { margin: 12px 0 15px; font-size: 24px; line-height: 28px; font-weight: 400; }
article a { color: #e0594e; text-decoration: underline; }
article code { font: 11px/14px "DejaVu Sans Mono", monospace; color: #c7254e; border: 1px solid #e6e0e6; border-radius: 3px; padding: 1px 4px; background: #fcf9fb; }
.ext { display: inline-block; width: 10px; height: 10px; }
.thumb { flex: none; width: 4px; height: 119px; margin: 197px 1px 0 0; background: #bdbdbd; border-radius: 2px; }
.desk { flex: none; display: flex; height: 29px; background: linear-gradient(#8d8b8e, #c9c7ca); }
.desk i:nth-child(1) { width: 87px; background: #0d0a0d; }
.desk i:nth-child(2) { width: 232px; }
.desk i:nth-child(3) { width: 60px; border: 1px solid #9c9a9d; border-width: 0 1px; }
.desk i:nth-child(4) { width: 34px; margin-left: auto; background: #14111c; }
.controls { position: absolute; top: 14px; left: 0; width: 1342px; max-width: 100%; display: flex; justify-content: center; }
.controls button { width: 48px; height: 48px; background: rgba(8, 8, 8, .8); }
.controls button:first-child { border-radius: 3px 0 0 3px; }
.controls button:last-child { border-radius: 0 3px 3px 0; }
.controls svg { width: 24px; height: 24px; }
.controls .off { background: #db4437; }
.cursor { position: absolute; left: 588px; top: 60px; }
.people { position: relative; flex: none; display: flex; justify-content: flex-end; padding: 18px 16px; color: #fff; font: 500 15px/20px Roboto, sans-serif; text-shadow: 0 1px 3px #000; }
.p1 { width: 100px; height: 100px; background: #040404; padding: 9px 7px; }
.p1 span { display: block; text-align: center; margin-top: 12px; }
.p2 { position: relative; width: 177px; height: 100px; background: #a0c2ff; overflow: hidden; }
.p2 svg { fill: #4374e0; }
.p2 span { position: absolute; left: 0; right: 0; top: 39px; text-align: center; }
.water { position: absolute; right: 86px; top: 41px; width: 235px; color: rgba(170, 170, 170, .65); text-shadow: none; font-family: "Open Sans", sans-serif; font-weight: 400; white-space: nowrap; }
.water p { margin: 0; font-size: 19px; line-height: 26px; }
.water small { display: block; font-size: 14px; line-height: 18px; }

/* taskbar */
.taskbar { flex: none; height: 40px; display: flex; background: #000; color: #fff; }
.taskbar button { width: 48px; margin-right: 1px; }
.taskbar .view { margin: 0 3px 0 -1px; }
.taskbar .app-btn { position: relative; }
.app-btn::after { content: ""; position: absolute; left: 4px; right: 4px; bottom: 0; height: 2px; background: #76b9ed; }
.app-btn.active { background: #333; }
.app-btn.active::after { left: 0; right: 0; }
.tray { margin-left: auto; display: flex; align-items: center; gap: 7px; padding-right: 20px; margin-right: 4px; border-right: 1px solid #555; }
.tray svg:first-child { margin-right: 6px; }
.time { font-size: 12px; line-height: 18px; text-align: center; margin: 0 8px 0 4px; }
```
